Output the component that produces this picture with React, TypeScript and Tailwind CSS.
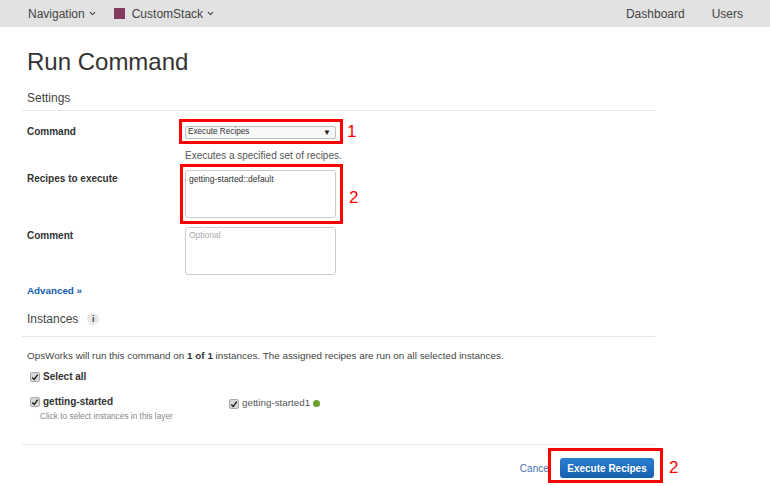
import React from "react";
import { ChevronDown } from "lucide-react";

function Check() {
  return (
    <span className="flex h-[10px] w-[10px] shrink-0 items-center justify-center rounded-[2px] border border-[#aaa] bg-[#d8d8d8]">
      <svg viewBox="0 0 10 10" className="h-[8px] w-[8px]">
        <path d="M1.5 5.5 L4 8 L8.5 2" fill="none" stroke="#222" strokeWidth="1.8" />
      </svg>
    </span>
  );
}

function Mark({ cls, num, numCls }: { cls: string; num: string; numCls: string }) {
  return (
    <>
      <div className={`absolute border-[3px] border-[#f00] ${cls}`} />
      <div className={`absolute text-[17px] leading-[20px] text-[#f00] ${numCls}`}>{num}</div>
    </>
  );
}

export default function App() {
  return (
    <div className="relative h-[486px] w-[770px] overflow-hidden bg-white text-[10px] text-[#444] [font-family:'Liberation_Sans',Arial,sans-serif]">
      <header className="flex h-[27px] items-center justify-between bg-[#e2e2e2] pl-[28px] pr-[27px] text-[12px] text-[#444]">
        <div className="flex items-center">
          <span>Navigation</span>
          <ChevronDown className="ml-[3px] h-[9px] w-[9px]" strokeWidth={3} />
          <span className="ml-[17px] h-[11px] w-[11px] bg-[#843b62]" />
          <span className="ml-[7px]">CustomStack</span>
          <ChevronDown className="ml-[3px] h-[9px] w-[9px]" strokeWidth={3} />
        </div>
        <div className="flex items-center gap-[27px]">
          <span>Dashboard</span>
          <span>Users</span>
        </div>
      </header>

      <main className="w-[655px]">
        <h1 className="ml-[27px] mt-[20px] text-[24px] font-normal leading-[30px] text-[#333]">Run Command</h1>
        <h2 className="ml-[27px] mt-[14px] text-[12px] font-normal leading-[15px] text-[#444]">Settings</h2>
        <div className="ml-[22px] mt-[4px] h-px bg-[#e6e6e6]" />

        <div className="ml-[27px] mt-[15px] flex h-[13px]">
          <label className="w-[158px] font-bold leading-[11px] text-[#333]">Command</label>
          <div className="flex h-[13px] w-[151px] items-center justify-between rounded-[2px] border border-[#bbb] bg-[#f8f8f8] pl-[2px] pr-[4px] text-[8.2px] text-[#333]">
            <span>Execute Recipes</span>
            <span className="text-[8px] text-[#222]">▼</span>
          </div>
        </div>
        <div className="ml-[185px] mt-[10px] text-[10px] leading-[13px] text-[#555]">Executes a specified set of recipes.</div>

        <div className="ml-[27px] mt-[8px] flex h-[48px]">
          <label className="mt-[3px] w-[158px] font-bold leading-[11px] text-[#333]">Recipes to execute</label>
          <div className="h-[48px] w-[151px] rounded-[3px] border border-[#ccc] px-[3px] pt-[2px] text-[8.5px] leading-[12px] text-[#333]">getting-started::default</div>
        </div>

        <div className="ml-[27px] mt-[9px] flex h-[48px]">
          <label className="mt-[3px] w-[158px] font-bold leading-[11px] text-[#333]">Comment</label>
          <div className="h-[48px] w-[151px] rounded-[3px] border border-[#ccc] px-[3px] pt-[1px] text-[8.5px] leading-[12px] text-[#aaa]">Optional</div>
        </div>

        <a className="ml-[27px] mt-[10px] block text-[9.8px] font-bold leading-[12px] text-[#0f5cb0]">Advanced »</a>

        <div className="ml-[27px] mt-[14px] flex h-[16px] items-center text-[12px] text-[#444]">
          <span>Instances</span>
          <span className="ml-[9px] flex h-[12px] w-[12px] items-center justify-center rounded-full bg-[#e8e8e8] text-[9px] font-bold leading-none text-[#444]">i</span>
        </div>
        <div className="ml-[22px] mt-[9px] h-px bg-[#e6e6e6]" />

        <p className="ml-[27px] mt-[12px] whitespace-nowrap text-[9.9px] leading-[13px] text-[#444]">
          OpsWorks will run this command on <b className="text-[#333]">1 of 1</b> instances. The assigned recipes are run on all selected instances.
        </p>

        <div className="ml-[30px] mt-[8px] flex h-[13px] items-center gap-[3px] text-[10px] font-bold text-[#333]">
          <Check />
          <span>Select all</span>
        </div>

        <div className="ml-[30px] mt-[12px] flex h-[32px]">
          <div className="w-[199px]">
            <div className="flex h-[13px] items-center gap-[3px] text-[10px] font-bold text-[#333]">
              <Check />
              <span>getting-started</span>
            </div>
            <div className="ml-[10px] mt-[3px] text-[8.3px] leading-[10px] text-[#888]">Click to select instances in this layer</div>
          </div>
          <div className="mt-[2px] flex h-[13px] items-center text-[9.8px] text-[#555]">
            <Check />
            <span className="ml-[3px]">getting-started1</span>
            <span className="ml-[3px] h-[7px] w-[7px] rounded-full bg-[#6a9e2f]" />
          </div>
        </div>

        <div className="ml-[22px] mt-[17px] h-px bg-[#e6e6e6]" />

        <div className="mt-[13px] flex h-[20px] items-center justify-end pr-px">
          <a className="mr-[9px] text-[10px] text-[#4a6fa8]">Cancel</a>
          <button className="flex h-[20px] w-[94px] items-center justify-center rounded-[3px] bg-gradient-to-b from-[#2a7fd0] to-[#1560ae] text-[10px] font-bold text-white">Execute Recipes</button>
        </div>
      </main>

      <Mark cls="left-[179px] top-[119px] h-[25px] w-[164px]" num="1" numCls="left-[347px] top-[122px]" />
      <Mark cls="left-[180px] top-[164px] h-[60px] w-[163px]" num="2" numCls="left-[349px] top-[188px]" />
      <Mark cls="left-[548px] top-[448px] h-[35px] w-[115px]" num="2" numCls="left-[669px] top-[458px]" />
    </div>
  );
}
